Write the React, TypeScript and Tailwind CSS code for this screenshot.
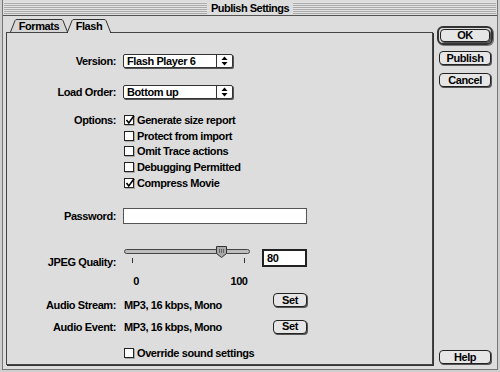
import React from "react";

function Arrows() {
  return (
    <svg width="7" height="10" viewBox="0 0 7 10">
      <path d="M3.5,0.5 L6.5,4 L0.5,4 Z" fill="#000" />
      <path d="M0.5,6 L6.5,6 L3.5,9.5 Z" fill="#000" />
    </svg>
  );
}

function Select({ value }: { value: string }) {
  return (
    <div className="flex h-[14px] w-[110px] border border-[#333] bg-white rounded-[2px] shadow-[1px_1px_0_#555]">
      <span className="flex-1 pl-[3px] leading-[12px]">{value}</span>
      <span className="w-[16px] border-l border-[#333] flex items-center justify-center">
        <Arrows />
      </span>
    </div>
  );
}

function Check({ checked, label }: { checked?: boolean; label: string }) {
  return (
    <div className="flex items-center h-[15.75px]">
      <span className="w-[10px] h-[10px] border border-[#222] bg-white shadow-[1px_1px_0_#aaa] relative flex items-center justify-center">
        {checked && (
          <svg width="10" height="10" viewBox="0 0 10 10" className="absolute -top-[1px] left-0">
            <path d="M1.5,5 L3.8,8 L9,0.8" fill="none" stroke="#000" strokeWidth="1.6" />
          </svg>
        )}
      </span>
      <span className="ml-[3px] leading-[12px]">{label}</span>
    </div>
  );
}

function Btn({ children, className = "" }: { children: React.ReactNode; className?: string }) {
  return (
    <div
      className={
        "flex items-center justify-center border border-[#222] rounded-[4px] bg-[#e6e6e6] shadow-[1px_1px_0_#555] leading-none " +
        className
      }
    >
      {children}
    </div>
  );
}

function Label({ children }: { children: React.ReactNode }) {
  return <div className="w-[109px] shrink-0 text-right leading-[12px]">{children}</div>;
}

function Slider() {
  return (
    <svg width="128" height="18" viewBox="0 0 128 18">
      <rect x="1.5" y="3.5" width="125" height="4" rx="2" fill="#bdbdbd" stroke="#444" />
      <path d="M93.5,0.5 L103.5,0.5 L103.5,7.5 L98.5,11.5 L93.5,7.5 Z" fill="#a8a8a8" stroke="#333" />
      <line x1="96.5" y1="3" x2="96.5" y2="7" stroke="#666" />
      <line x1="98.5" y1="3" x2="98.5" y2="7" stroke="#666" />
      <line x1="100.5" y1="3" x2="100.5" y2="7" stroke="#666" />
      <line x1="9.5" y1="12" x2="9.5" y2="17" stroke="#333" />
      <line x1="121.5" y1="12" x2="121.5" y2="17" stroke="#333" />
    </svg>
  );
}

export default function App() {
  return (
    <div className="w-[500px] h-[372px] bg-[#cfcfcf] px-[2px] pb-[2px] font-['Liberation_Sans',Arial,sans-serif] text-[11px] font-bold tracking-[-0.4px] text-black">
      <div className="h-full flex flex-col bg-[#dddddd] border-x border-b border-[#777]">
        {/* Title bar */}
        <div className="h-[16px] shrink-0 flex items-center border-b border-[#555] bg-[#dddddd] px-[1px]">
          <div className="flex-1 h-[12px] bg-[repeating-linear-gradient(to_bottom,#e4e4e4_0px,#e4e4e4_1px,#aaaaaa_1px,#aaaaaa_2px)]" />
          <div className="px-[4px] text-[11px] leading-[12px] tracking-[-0.5px]">Publish Settings</div>
          <div className="flex-1 h-[12px] bg-[repeating-linear-gradient(to_bottom,#e4e4e4_0px,#e4e4e4_1px,#aaaaaa_1px,#aaaaaa_2px)]" />
        </div>

        {/* Body */}
        <div className="flex-1 flex pl-[3px] pr-[4px]">
          {/* Left: tabs + panel */}
          <div className="w-[427px] flex flex-col mb-[4px]">
            <div className="mt-[3px] h-[13px] flex pl-[4px]">
              <div className="relative w-[58px] h-[13px] flex items-center justify-center">
                <svg width="58" height="13" viewBox="0 0 58 13" className="absolute inset-0">
                  <path
                    d="M0.5,13 L5,1.6 Q5.5,0.5 7,0.5 L51,0.5 Q52.5,0.5 53,1.6 L57.5,13"
                    fill="#d6d6d6"
                    stroke="#333"
                  />
                </svg>
                <span className="relative leading-[12px] pt-[1px]">Formats</span>
              </div>
              <div className="relative z-10 -ml-[1px] w-[44px] h-[13px] flex items-center justify-center">
                <svg width="44" height="14" viewBox="0 0 44 14" className="absolute left-0 top-0 overflow-visible">
                  <path
                    d="M0.5,14 L0.5,13 L5,1.6 Q5.5,0.5 7,0.5 L37,0.5 Q38.5,0.5 39,1.6 L43.5,13 L43.5,14"
                    fill="#dddddd"
                    stroke="#333"
                  />
                </svg>
                <span className="relative leading-[12px] pt-[1px]">Flash</span>
              </div>
            </div>

            <div className="flex-1 flex flex-col border border-[#444] shadow-[1px_1px_0_#333]">
              {/* Version */}
              <div className="mt-[20px] h-[15px] flex items-center">
                <Label>Version:</Label>
                <div className="ml-[7px]">
                  <Select value="Flash Player 6" />
                </div>
              </div>
              {/* Load order */}
              <div className="mt-[16px] h-[15px] flex items-center">
                <Label>Load Order:</Label>
                <div className="ml-[7px]">
                  <Select value="Bottom up" />
                </div>
              </div>
              {/* Options */}
              <div className="mt-[13px] flex items-start">
                <div className="h-[15.75px] flex items-center">
                  <Label>Options:</Label>
                </div>
                <div className="ml-[8px] flex flex-col">
                  <Check checked label="Generate size report" />
                  <Check label="Protect from import" />
                  <Check label="Omit Trace actions" />
                  <Check label="Debugging Permitted" />
                  <Check checked label="Compress Movie" />
                </div>
              </div>
              {/* Password */}
              <div className="mt-[17.25px] h-[16px] flex items-center">
                <Label>Password:</Label>
                <div className="ml-[7px] w-[184px] h-[16px] border border-[#555] bg-white" />
              </div>
              {/* JPEG quality */}
              <div className="mt-[22px] h-[22px] flex items-start">
                <div className="self-end">
                  <Label>JPEG Quality:</Label>
                </div>
                <div className="ml-[7px]">
                  <Slider />
                </div>
                <div className="ml-[11px] mt-[3px] w-[45px] h-[18px] border-2 border-[#222] bg-white flex items-center pl-[3px] leading-[12px]">
                  80
                </div>
              </div>
              {/* Scale labels */}
              <div className="mt-[7px] h-[12px] flex items-center leading-[12px]">
                <div className="w-[126px] shrink-0" />
                <div className="w-[6px] text-center">0</div>
                <div className="w-[90px]" />
                <div className="w-[20px] text-center">100</div>
              </div>
              {/* Audio stream */}
              <div className="mt-[6px] h-[15px] flex items-start">
                <div className="mt-[6px]">
                  <Label>Audio Stream:</Label>
                </div>
                <div className="ml-[8px] mt-[6px] w-[149px] leading-[12px]">MP3, 16 kbps, Mono</div>
                <Btn className="w-[34px] h-[14px]">Set</Btn>
              </div>
              {/* Audio event */}
              <div className="mt-[11px] h-[15px] flex items-center">
                <Label>Audio Event:</Label>
                <div className="ml-[8px] w-[149px] leading-[12px]">MP3, 16 kbps, Mono</div>
                <Btn className="w-[34px] h-[14px]">Set</Btn>
              </div>
              {/* Override */}
              <div className="mt-[11px] h-[16px] flex items-center pl-[117px]">
                <Check label="Override sound settings" />
              </div>
            </div>
          </div>

          {/* Right: buttons */}
          <div className="ml-[4px] w-[56px] flex flex-col mb-[5px]">
            <div className="mt-[10px] h-[19px] border-2 border-[#333] rounded-[6px] p-[1px] shadow-[1px_1px_0_#777]">
              <Btn className="h-full rounded-[3px]">OK</Btn>
            </div>
            <Btn className="mt-[6px] ml-[2px] w-[52px] h-[14px]">Publish</Btn>
            <Btn className="mt-[8px] ml-[2px] w-[52px] h-[14px]">Cancel</Btn>
            <Btn className="mt-auto ml-[2px] w-[52px] h-[14px]">Help</Btn>
          </div>
        </div>
      </div>
    </div>
  );
}
